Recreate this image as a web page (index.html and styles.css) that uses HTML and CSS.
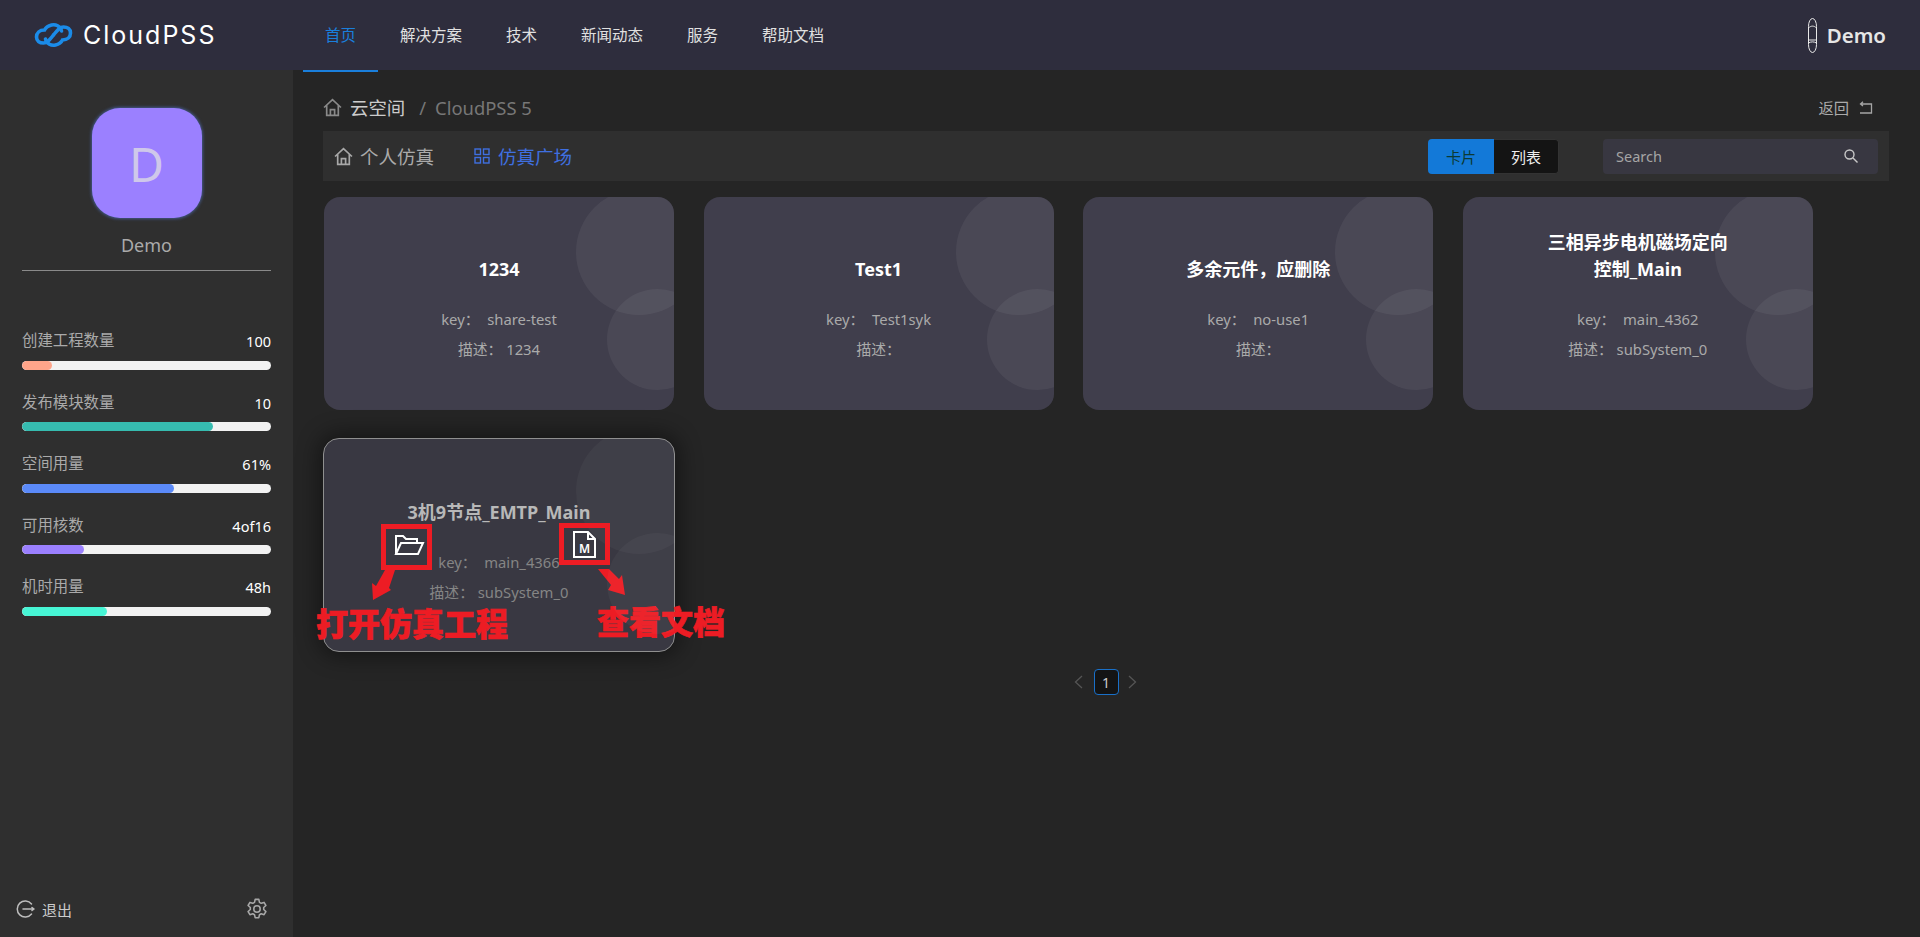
FILE: index.html
```html
<!DOCTYPE html>
<html lang="zh-CN">
<head>
<meta charset="utf-8">
<title>CloudPSS</title>
<link rel="stylesheet" href="styles.css">
</head>
<body>
<header class="topbar">
  <div class="logo">
    <svg class="logo-icon" viewBox="0 0 38 26" fill="none" stroke="#1b8be8" stroke-width="3.6" stroke-linecap="round">
      <path d="M27 9C26 4 21 2 17 3C13 4 11 6 10 8C5 8 2 11 2 15C2 19 5 21 9 21C13 21 15 18 19 13"/>
      <path d="M11 17C12 22 17 24 21 23C25 22 27 20 28 18C33 18 36 15 36 11C36 7 33 5 29 5C25 5 23 8 19 13"/>
    </svg>
    <span class="logo-text">CloudPSS</span>
  </div>
  <nav class="nav">
    <a class="nav-item nav-item--active">首页</a>
    <a class="nav-item">解决方案</a>
    <a class="nav-item">技术</a>
    <a class="nav-item">新闻动态</a>
    <a class="nav-item">服务</a>
    <a class="nav-item">帮助文档</a>
  </nav>
  <div class="user">
    <svg class="user-icon" viewBox="0 0 9 35" fill="none" stroke="#e8e8e8" stroke-width="1">
      <rect x=".5" y=".5" width="8" height="34" rx="4" ry="8"/>
      <path d="M.5 10C3 7.500 6 7.500 8.500 10M.5 22H8.500M.5 25C3 23.500 6 23.500 8.500 25"/>
    </svg>
    <span class="user-name">Demo</span>
  </div>
</header>

<div class="layout">
  <aside class="sidebar">
    <div class="avatar">D</div>
    <div class="profile-name">Demo</div>
    <div class="stats">
      <div class="stat">
        <div class="stat-head"><span class="stat-label">创建工程数量</span><span class="stat-value">100</span></div>
        <div class="bar"><div class="bar-fill bar-fill--salmon" style="width:12%"></div></div>
      </div>
      <div class="stat">
        <div class="stat-head"><span class="stat-label">发布模块数量</span><span class="stat-value">10</span></div>
        <div class="bar"><div class="bar-fill bar-fill--teal" style="width:76.800%"></div></div>
      </div>
      <div class="stat">
        <div class="stat-head"><span class="stat-label">空间用量</span><span class="stat-value">61%</span></div>
        <div class="bar"><div class="bar-fill bar-fill--blue" style="width:61%"></div></div>
      </div>
      <div class="stat">
        <div class="stat-head"><span class="stat-label">可用核数</span><span class="stat-value">4of16</span></div>
        <div class="bar"><div class="bar-fill bar-fill--purple" style="width:25%"></div></div>
      </div>
      <div class="stat">
        <div class="stat-head"><span class="stat-label">机时用量</span><span class="stat-value">48h</span></div>
        <div class="bar"><div class="bar-fill bar-fill--mint" style="width:34.200%"></div></div>
      </div>
    </div>
    <div class="side-foot">
      <a class="logout">
        <svg class="logout-icon" viewBox="0 0 20 18" fill="none" stroke="#bdbdbd" stroke-width="1.500" stroke-linecap="round" stroke-linejoin="round">
          <path d="M16.500 4A8 8 0 1 0 16.500 14"/>
          <path d="M8 9H19M17 7.500L19 9L17 10.500"/>
        </svg>
        <span>退出</span>
      </a>
      <svg class="gear" viewBox="0 0 24 24" fill="none" stroke="#a8a8a8" stroke-width="1.700" stroke-linejoin="round">
        <path d="M10 1.500h4l.7 3.200 1.900 1.100 3.100-1 2 3.400-2.400 2.200v2.200l2.400 2.200-2 3.400-3.100-1-1.900 1.100-.7 3.200h-4l-.7-3.200-1.900-1.100-3.100 1-2-3.400 2.400-2.200v-2.200L2.300 8.200l2-3.400 3.100 1 1.900-1.100z"/>
        <circle cx="12" cy="12" r="3.500"/>
      </svg>
    </div>
  </aside>

  <main class="main">
    <div class="crumb-row">
      <svg class="home-icon" viewBox="0 0 18 18" fill="none" stroke="#8a8a8a" stroke-width="1.600">
        <path d="M1 9L9 1.500L17 9M3.500 7V16.500H14.500V7M7 16.500V11H11V16.500"/>
      </svg>
      <span class="crumb-current">云空间</span>
      <span class="crumb-sep">/</span>
      <span class="crumb-project">CloudPSS 5</span>
      <a class="back">
        <span>返回</span>
        <svg class="back-icon" viewBox="0 0 14 13" fill="none" stroke="#a5a5a5" stroke-width="1.300">
          <path d="M1 12H12.500V3H1.500M4 .8L1.500 3L4 5"/>
        </svg>
      </a>
    </div>

    <div class="toolbar">
      <a class="tool-tab">
        <svg class="home-icon" viewBox="0 0 18 18" fill="none" stroke="#a8a8a8" stroke-width="1.600">
          <path d="M1 9L9 1.500L17 9M3.500 7V16.500H14.500V7M7 16.500V11H11V16.500"/>
        </svg>
        <span>个人仿真</span>
      </a>
      <a class="tool-tab tool-tab--blue">
        <svg class="grid-icon" viewBox="0 0 16 16" fill="none" stroke="#3f6fe0" stroke-width="1.400">
          <rect x="1" y="1" width="5.500" height="5.500"/><rect x="9.500" y="1" width="5.500" height="5.500"/>
          <rect x="1" y="9.500" width="5.500" height="5.500"/><rect x="9.500" y="9.500" width="5.500" height="5.500"/>
        </svg>
        <span>仿真广场</span>
      </a>
      <div class="toggle">
        <span class="toggle-item toggle-item--on">卡片</span>
        <span class="toggle-item">列表</span>
      </div>
      <div class="search">
        <span>Search</span>
        <svg class="search-icon" viewBox="0 0 14 14" fill="none" stroke="#c8c8c8" stroke-width="1.400">
          <circle cx="5.500" cy="5.500" r="4.500"/><path d="M9 9L13.500 13.500"/>
        </svg>
      </div>
    </div>

    <section class="cards">
      <article class="card">
        <h3 class="card-title">1234</h3>
        <p class="card-line">key： &nbsp;share-test</p>
        <p class="card-line">描述： 1234</p>
      </article>
      <article class="card">
        <h3 class="card-title">Test1</h3>
        <p class="card-line">key： &nbsp;Test1syk</p>
        <p class="card-line">描述：</p>
      </article>
      <article class="card">
        <h3 class="card-title">多余元件，应删除</h3>
        <p class="card-line">key： &nbsp;no-use1</p>
        <p class="card-line">描述：</p>
      </article>
      <article class="card">
        <h3 class="card-title">三相异步电机磁场定向控制_Main</h3>
        <p class="card-line">key： &nbsp;main_4362</p>
        <p class="card-line">描述： subSystem_0</p>
      </article>
      <article class="card card--hover">
        <h3 class="card-title">3机9节点_EMTP_Main</h3>
        <p class="card-line">key： &nbsp;main_4366</p>
        <p class="card-line">描述： subSystem_0</p>
        <svg class="marks" viewBox="0 0 480 214" fill="none">
          <rect class="mark-box" x="60.500" y="88.500" width="46" height="41"/>
          <rect class="mark-box" x="238.500" y="87.500" width="46" height="37"/>
          <polygon class="mark-arrow" points="62,132 72,132 66,150 68,152 50,162 49,145 53,148"/>
          <polygon class="mark-arrow" points="275,131 286,131 296,141 299,137 302,157 285,152 288,147"/>
          <path class="mark-icon" d="M73 116V98H80L83 101H94V105M73 116L78 105H100L95 116Z"/>
          <path class="mark-icon" d="M251 94V119H272V101L265 94ZM265 94V101H272"/>
          <text class="mark-m" x="261.500" y="114.500" text-anchor="middle">M</text>
        </svg>
        <span class="mark-label mark-label--open">打开仿真工程</span>
        <span class="mark-label mark-label--doc">查看文档</span>
      </article>
    </section>

    <div class="pager">
      <svg class="pager-arrow pager-arrow--prev" viewBox="0 0 9 14" fill="none" stroke="#555" stroke-width="1.300"><path d="M8 1L1.500 7L8 13"/></svg>
      <span class="pager-page">1</span>
      <svg class="pager-arrow" viewBox="0 0 9 14" fill="none" stroke="#555" stroke-width="1.300"><path d="M1 1L7.500 7L1 13"/></svg>
    </div>
  </main>
</div>
</body>
</html>
```

FILE: styles.css
```css
* { box-sizing: border-box; }
html, body { margin: 0; height: 100%; }
body {
  display: flex;
  flex-direction: column;
  height: 937px;
  overflow: hidden;
  background: #252525;
  color: #ccc;
  font-family: "Noto Sans", "Noto Sans CJK SC", sans-serif;
  font-size: 14px;
}
p, h3 { margin: 0; }

.topbar {
  flex: 0 0 70px;
  height: 70px;
  min-height: 0;
  display: flex;
  align-items: center;
  background: #2e2d3d;
  padding: 0 34px 0 34px;
  position: relative;
  z-index: 1;
}
.logo { display: flex; align-items: center; width: 269px; }
.logo-icon { width: 39px; height: 26px; }
.logo-text {
  margin-left: 10px;
  font-family: "Inter", sans-serif;
  font-weight: 400;
  font-size: 25px;
  letter-spacing: 2px;
  color: #fff;
}
.nav { display: flex; height: 72px; align-self: flex-start; }
.nav-item {
  display: flex;
  align-items: center;
  height: 72px;
  padding: 0 22px 2px;
  font-size: 15.500px;
  color: #e0e0e0;
  border-bottom: 2px solid transparent;
}
.nav-item--active { color: #1a7fdc; border-bottom-color: #1a7fdc; }
.user { margin-left: auto; display: flex; align-items: center; }
.user-icon { width: 9px; height: 35px; }
.user-name { margin-left: 10px; font-size: 20.500px; font-weight: 600; color: #e6e6e6; }

.layout { flex: 1; display: flex; min-height: 0; }

.sidebar {
  flex: 0 0 293px;
  display: flex;
  flex-direction: column;
  padding: 38px 22px 17px;
  background: #2f2f2f;
}
.avatar {
  align-self: center;
  width: 110px;
  height: 110px;
  flex: none;
  display: flex;
  align-items: center;
  justify-content: center;
  border-radius: 28px;
  background: #9b80ff;
  box-shadow: 0 0 3px 1px #44598a;
  color: #cfc8ea;
  font-size: 48px;
}
.profile-name {
  margin-top: 14px;
  padding-bottom: 12px;
  line-height: 26px;
  text-align: center;
  font-size: 18px;
  color: #aaa;
  border-bottom: 1px solid #8a8a8a;
}
.stats { margin-top: 60px; display: flex; flex-direction: column; gap: 23px; }
.stat-head { display: flex; justify-content: space-between; align-items: center; line-height: 20px; margin-bottom: 9.500px; }
.stat-label { font-size: 15.400px; color: #aaa; }
.stat-value { font-size: 14.500px; color: #fff; }
.bar { height: 9px; border-radius: 5px; background: #f2f2f2; overflow: hidden; }
.bar-fill { height: 100%; border-radius: 5px; }
.bar-fill--salmon { background: #ffa58a; }
.bar-fill--teal { background: #36bcb0; }
.bar-fill--blue { background: #5b8af9; }
.bar-fill--purple { background: #9b80ff; }
.bar-fill--mint { background: #47f5d5; }

.side-foot {
  margin-top: auto;
  display: flex;
  align-items: center;
  justify-content: space-between;
  margin-left: -7px;
  padding-right: 3px;
}
.logout { display: flex; align-items: center; gap: 7px; font-size: 15px; color: #ccc; }
.logout-icon { width: 20px; height: 18px; }
.gear { width: 22px; height: 22px; }

.main { flex: 1; min-width: 0; padding: 22px 31px 0 30px; }

.crumb-row {
  display: flex;
  align-items: center;
  height: 30px;
  margin-bottom: 9px;
  font-size: 18.400px;
}
.home-icon { width: 19px; height: 19px; }
.crumb-current { margin-left: 8px; color: #ccc; }
.crumb-sep { margin-left: 14px; color: #777; }
.crumb-project { margin-left: 9px; color: #777; }
.back { margin-left: auto; display: flex; align-items: center; gap: 10px; margin-right: 16px; font-size: 15.300px; color: #aaa; }
.back-icon { width: 14px; height: 13px; }

.toolbar {
  display: flex;
  align-items: center;
  height: 50px;
  padding: 0 11px 0 11px;
  background: #2f2f2f;
  font-size: 18.500px;
  color: #aaa;
}
.tool-tab { display: flex; align-items: center; gap: 7px; margin-right: 40px; }
.tool-tab--blue { color: #3f6fe0; gap: 8px; }
.grid-icon { width: 16px; height: 16px; }
.toggle {
  margin-left: auto;
  display: flex;
  height: 35px;
  border-radius: 4px;
  overflow: hidden;
  font-size: 15px;
}
.toggle-item {
  width: 65px;
  display: flex;
  align-items: center;
  justify-content: center;
  background: #141414;
  border: 1px solid #333;
  border-left: 0;
  color: #eee;
  border-radius: 0 4px 4px 0;
}
.toggle-item--on { background: #1379d8; border: 0; color: #0c3a33; border-radius: 0; width: 66px; }
.search {
  margin-left: 44px;
  width: 275px;
  height: 35px;
  display: flex;
  align-items: center;
  justify-content: space-between;
  padding: 0 20px 0 13px;
  border-radius: 4px;
  background: #383741;
  font-size: 14.500px;
  color: #a5a5a5;
}
.search-icon { width: 14px; height: 14px; }

.cards {
  display: grid;
  grid-template-columns: repeat(4, 350px);
  column-gap: 29.600px;
  row-gap: 28px;
  margin: 16px 0 0 1px;
}
.card {
  position: relative;
  height: 213px;
  padding: 0 80px;
  border-radius: 16px;
  background: #403e4c;
  text-align: center;
  overflow: hidden;
}
.card::before, .card::after {
  content: "";
  position: absolute;
  border-radius: 50%;
  background: rgba(255, 255, 255, .055);
}
.card::before { left: 252px; top: -8px; width: 126px; height: 126px; }
.card::after { left: 283px; top: 92px; width: 101px; height: 101px; }
.card-title {
  height: 86px;
  margin-bottom: 22px;
  display: flex;
  align-items: flex-end;
  justify-content: center;
  font-size: 18px;
  font-weight: 700;
  line-height: 27px;
  color: #fff;
}
.card-line { line-height: 29.500px; font-size: 14.800px; color: #aaa; white-space: nowrap; display: flex; justify-content: center; }

.card--hover {
  height: 214px;
  margin: 0 -1px;
  padding: 0 76px;
  background: #393842;
  border: 1px solid #8f8f8f;
  box-shadow: 0 0 22px 4px rgba(0, 0, 0, .45);
  overflow: visible;
}
.card--hover::before {
  top: -11px;
  background: rgba(255, 255, 255, .035);
  clip-path: inset(11px 27px 0 0 round 0 15px 0 0);
}
.card--hover::after {
  top: 94px;
  background: rgba(255, 255, 255, .035);
  clip-path: inset(0 34px 0 0);
}
.card--hover .card-title { height: 87px; color: #b8b8b8; }
.card--hover .card-line { color: #858585; }
.marks { position: absolute; left: -1px; top: -1px; width: 480px; height: 214px; overflow: visible; }
.mark-box { stroke: #ed1c24; stroke-width: 5; }
.mark-arrow { fill: #ed1c24; }
.mark-icon { stroke: #fff; stroke-width: 2; stroke-linejoin: miter; }
.mark-m { fill: #fff; font-family: "Noto Sans", sans-serif; font-size: 12px; font-weight: 600; }
.mark-label {
  position: absolute;
  color: #ed1c24;
  font-size: 32px;
  font-weight: 900;
  line-height: 40px;
  white-space: nowrap;
  -webkit-text-stroke: .7px #ed1c24;
}
.mark-label--open { left: -8px; top: 165px; }
.mark-label--doc { left: 273px; top: 163px; }

.pager {
  margin-top: 17px;
  padding-right: 2px;
  display: flex;
  align-items: center;
  justify-content: center;
  gap: 9px;
}
.pager-arrow { width: 9px; height: 14px; }
.pager-arrow--prev { margin-right: 2px; }
.pager-page {
  width: 25px;
  height: 26px;
  display: flex;
  align-items: center;
  justify-content: center;
  border: 1px solid #1a70c8;
  border-radius: 4px;
  background: #141414;
  color: #ccc;
}
```
